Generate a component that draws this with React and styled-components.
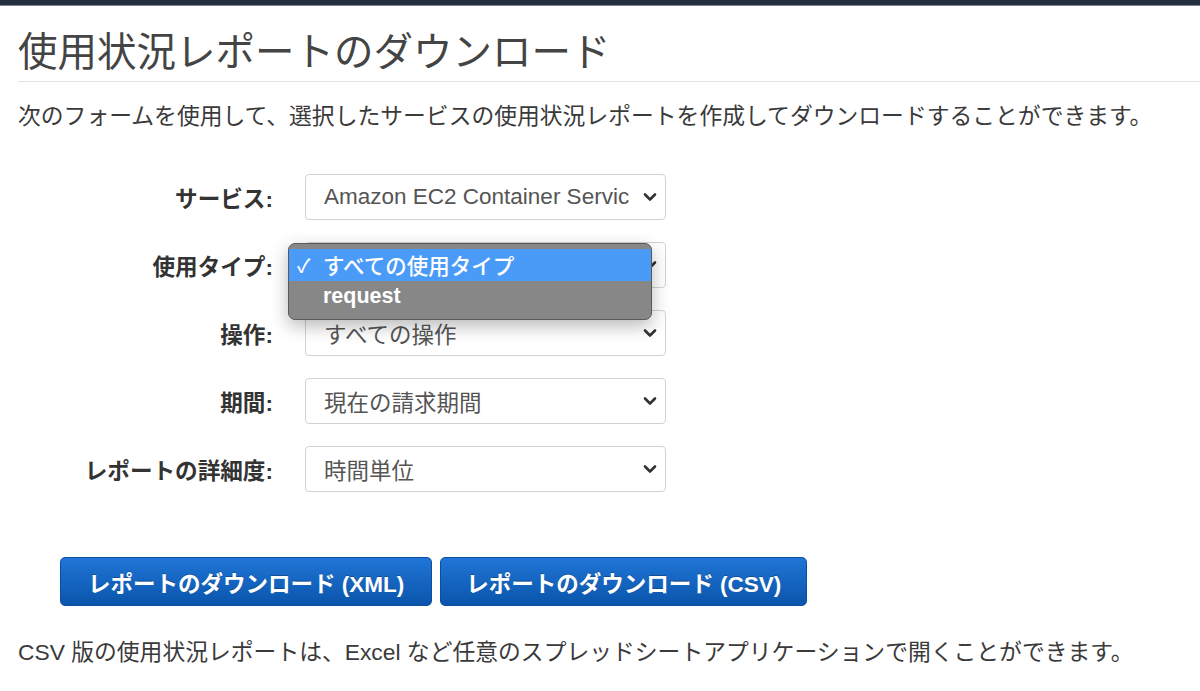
import styled, { createGlobalStyle } from "styled-components"

const GlobalStyle = createGlobalStyle`
    body {
        margin: 0;
        background: #fff;
        font-family: "Liberation Sans", "Noto Sans CJK JP", sans-serif;
        color: #444;
    }
`

const TopBar = styled.div`
    height: 5px;
    background: #232f3e;
    border-bottom: 1px solid #7b8392;
`

const Page = styled.main`
    padding-left: 18px;
`

const Heading = styled.h1`
    margin: 23px 0 0;
    padding-bottom: 5px;
    font-size: 39.5px;
    line-height: 47px;
    font-weight: 400;
    color: #444;
    border-bottom: 1px solid #e2e2e2;
`

const Text = styled.p`
    margin: ${({$top}) => $top}px 0 0;
    font-size: 22.8px;
    line-height: 32px;
    color: #3a3a3a;
    white-space: nowrap;
`

const Form = styled.div`
    margin-top: 42px;
    display: grid;
    row-gap: 22px;
`

const Row = styled.div`
    display: grid;
    grid-template-columns: 255px 361px;
    column-gap: 32px;
    align-items: center;
`

const Label = styled.label`
    text-align: right;
    font-size: 22.6px;
    font-weight: 700;
    color: #333;
`

const Field = styled.div`
    position: relative;
`

const SelectBox = styled.div`
    height: 46px;
    box-sizing: border-box;
    display: flex;
    align-items: center;
    justify-content: space-between;
    padding: 0 8px 0 18px;
    border: 1px solid #d3d3d3;
    border-radius: 4px;
    background: #fff;
    font-size: 22.5px;
    color: #555;
`

const Value = styled.span`
    overflow: hidden;
    white-space: nowrap;
    width: 306px;
`

const Chevron = () => (
    <svg width="14" height="10" viewBox="0 0 14 10">
        <path d="M2 2.5 L7 7.5 L12 2.5" fill="none" stroke="#333" strokeWidth="2.6" strokeLinecap="round" strokeLinejoin="round" />
    </svg>
)

const Menu = styled.ul`
    position: absolute;
    left: -17px;
    top: 1px;
    width: 364px;
    box-sizing: border-box;
    margin: 0;
    padding: 5px 0 6px;
    list-style: none;
    background: #878787;
    border: 1px solid #5a5a5a;
    border-radius: 7px;
    box-shadow: 0 6px 18px rgba(0, 0, 0, 0.28);
    z-index: 2;
`

const MenuItem = styled.li`
    display: flex;
    align-items: center;
    height: 32px;
    padding-left: 8px;
    padding-bottom: 2px;
    box-sizing: border-box;
    font-size: 21.5px;
    font-weight: ${({$bold}) => ($bold ? 700 : 500)};
    color: #fff;
    background: ${({$active}) => ($active ? "#4a9bf7" : "transparent")};
`

const Check = styled.span`
    width: 26px;
    font-size: 19px;
    font-weight: 500;
`

const Buttons = styled.div`
    margin: 65px 0 0 42px;
    display: flex;
    gap: 8px;
`

const Button = styled.button`
    height: 49px;
    padding: 0 ${({$pad}) => $pad}px;
    border: 1px solid #0c4f9f;
    border-radius: 5px;
    background: linear-gradient(#2075d6, #0a55ab);
    color: #fff;
    font-family: inherit;
    font-size: 22.5px;
    font-weight: 700;
    text-shadow: 0 -1px 0 rgba(0, 0, 0, 0.25);
`

const fields = [
    {label: "サービス:", value: "Amazon EC2 Container Service"},
    {label: "使用タイプ:", value: "すべての使用タイプ", open: true},
    {label: "操作:", value: "すべての操作"},
    {label: "期間:", value: "現在の請求期間"},
    {label: "レポートの詳細度:", value: "時間単位"},
]

const App = () => {
    return (
        <>
            <GlobalStyle />
            <TopBar />
            <Page>
                <Heading>使用状況レポートのダウンロード</Heading>
                <Text $top={18}>
                    次のフォームを使用して、選択したサービスの使用状況レポートを作成してダウンロードすることができます。
                </Text>

                <Form>
                    {fields.map((f) => (
                        <Row key={f.label}>
                            <Label>{f.label}</Label>
                            <Field>
                                <SelectBox>
                                    <Value>{f.value}</Value>
                                    <Chevron />
                                </SelectBox>
                                {f.open && (
                                    <Menu>
                                        <MenuItem $active>
                                            <Check>✓</Check>
                                            すべての使用タイプ
                                        </MenuItem>
                                        <MenuItem $bold>
                                            <Check />
                                            request
                                        </MenuItem>
                                    </Menu>
                                )}
                            </Field>
                        </Row>
                    ))}
                </Form>

                <Buttons>
                    <Button $pad={27}>レポートのダウンロード (XML)</Button>
                    <Button $pad={25}>レポートのダウンロード (CSV)</Button>
                </Buttons>

                <Text $top={30}>
                    CSV 版の使用状況レポートは、Excel など任意のスプレッドシートアプリケーションで開くことができます。
                </Text>
            </Page>
        </>
    )
}

export default App
